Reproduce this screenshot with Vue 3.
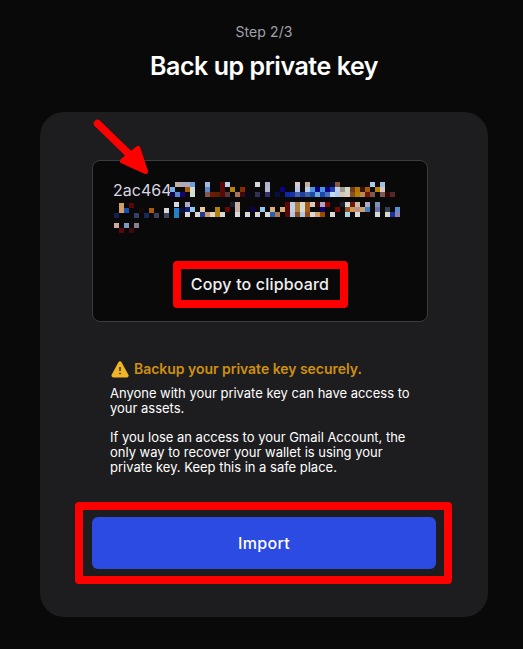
<script setup>
const rows = [
  { x: 170, y: 182, cells: '1:c0b0a0 2:b0a8c0 3:b0a8c0 4:6ca0dc 7:a8b8d8 10:580808 11:c0d0e8 17:d8d8dc 19:b0b0d0 25:d8c8c8 27:c8b098 32:080830 33:885838 40:b0c8e8 42:a0c0e0' },
  { x: 170, y: 187, cells: '0:78b0e8 3:a85c00 4:d0dcd8 7:5c88c8 10:580808 12:b88408 14:882c00 19:b8b8d0 22:100088 25:b8c8e8 27:c0d0e8 28:4898e0 29:080088 30:4898e0 31:100088 32:2040b0 33:c0d0e8 34:a09888 35:d0d8c8 36:783810 37:b07800 38:401000 39:a05c08 41:b88400 42:d8c8c8' },
  { x: 170, y: 192, cells: '0:100050 1:5888c8 2:180078 4:d0dcd0 7:805850 8:701808 9:582000 10:580808 11:583840 13:a87058 14:400810 15:080820 17:303058 19:383068 21:081040 23:1028a8 24:1830a8 25:4860a8 26:2040a8 27:4060a8 28:1848b0 29:70a8d8 30:1848b0 31:4870c0 32:c0dcf0 33:b0d0e8 34:d8c8b0 35:d8d0c8 36:885020 37:b08000 38:b88858 39:701808 40:805850 42:805850 43:300808 44:582828' },
  { x: 170, y: 202, cells: '3:b0a8c0 12:182030 13:c8b0a8 23:580808 24:c0d0e8 25:b08040 26:d8dcd0 27:a05c18 28:d8c8c0 29:380808 30:b0a8c0 31:780808 34:182030 35:d8d8d8 36:701808 37:d0b8a8 39:b0a8c0 41:8090b8' },
  { x: 170, y: 207, cells: '3:101878 4:90c8f0 6:e8c8a0 9:b08010 11:680808 13:c8b0a8 16:100050 18:90c8f0 20:d8b080 22:d8b080 23:580808 24:c0d0e8 25:b08040 26:d8dcd0 27:a05c18 30:100070 33:780808 35:905820 36:d09850 37:b89088 38:d0a068 39:3880c8 41:7070a8 43:384058 45:5890d0' },
  { x: 170, y: 212, cells: '3:d8d8d8 5:d8d8d8 6:203890 7:c89870 8:e0d8c0 9:b08010 10:d8d8d8 13:d8d8d8 15:d8d8d8 17:d8d8d8 19:d8d8d8 20:2860b0 21:b07850 23:580808 24:b0c8e0 25:884820 26:b0c8e0 27:904818 28:d8d8d8 29:d8a068 30:984c00 32:d8d8d8 35:b0d0e8 37:d8d8d8 39:180808 41:d8d8d8 43:d8d8c8 44:1830a0 45:9080b0' },
  { x: 114, y: 203, cells: '1:d0a068 3:580808' },
  { x: 114, y: 202, cells: '12:d0d8e0' },
  { x: 114, y: 208, cells: '1:d0a068 2:1850b0 5:180808 7:a85c08 10:d8d8d8 12:2080c8 13:081040' },
  { x: 114, y: 213, cells: '0:102050 4:304068 6:182858 8:404058 10:404860 12:2080c8' },
  { x: 114, y: 223, cells: '0:d0a8a0 2:8098c0 4:888090' },
  { x: 114, y: 228, cells: '1:580808 3:400810' },
]
const tiles = rows.flatMap(({ x, y, cells }) =>
  cells.split(' ').map((cell) => {
    const [column, colour] = cell.split(':')
    return { x: x + Number(column) * 5, y, colour: '#' + colour }
  }),
)
</script>

<template>
  <main class="page">
    <p class="step">Step 2/3</p>
    <h1 class="title">Back up private key</h1>
    <section class="card">
      <div class="keybox">
        <span class="key">2ac464</span>
        <button class="copy">Copy to clipboard</button>
      </div>
      <div class="notice">
        <h2 class="warning">
          <svg class="icon" width="18" height="17" viewBox="0 0 18 17">
            <path d="M9 2.200 15.800 14.600H2.200Z" fill="#f0b429" stroke="#f0b429" stroke-width="3.600" stroke-linejoin="round" />
            <path d="M9 6v4" stroke="#5a4a20" stroke-width="1.800" />
            <circle cx="9" cy="12.500" r="1" fill="#5a4a20" />
          </svg>
          <span class="warning-text">Backup your private key securely.</span>
        </h2>
        <p class="copytext">Anyone with your private key can have access to<br />your assets.</p>
        <p class="copytext">If you lose an access to your Gmail Account, the<br />only way to recover your wallet is using your<br />private key. Keep this in a safe place.</p>
      </div>
      <button class="import">Import</button>
    </section>
    <svg class="overlay" width="523" height="649" viewBox="0 0 523 649">
      <g shape-rendering="crispEdges">
        <rect v-for="(t, i) in tiles" :key="i" :x="t.x" :y="t.y" width="5" height="5" :fill="t.colour" />
      </g>
      <g fill="none" stroke="#f00">
        <path d="M97.500 123.500 132 157" stroke-width="7.500" stroke-linecap="round" />
        <path d="M122.500 161 138 148.500 145.500 171.500Z" fill="#f00" stroke-width="5" stroke-linejoin="round" />
        <g stroke-width="8" stroke-linejoin="round">
          <rect x="177" y="265" width="167" height="39" />
          <rect x="79" y="506" width="369" height="74" />
        </g>
      </g>
    </svg>
  </main>
</template>

<style>
body { margin: 0; background: #090909; }
</style>

<style scoped>
.page {
  position: relative;
  box-sizing: border-box;
  width: 523px;
  height: 649px;
  padding-left: 40px;
  overflow: hidden;
  background: #090909;
  color: #fff;
  font-family: Inter, sans-serif;
}
.step, .title { width: 448px; margin: 0; text-align: center; }
.step { padding-top: 22px; font-size: 14px; line-height: 20px; color: #a1a1aa; letter-spacing: 0.1px; }
.title { padding-top: 8px; font-size: 25px; font-weight: 600; line-height: 32px; letter-spacing: -0.45px; }
.card {
  box-sizing: border-box;
  width: 448px;
  height: 505px;
  margin-top: 30px;
  padding: 48px 52px;
  border-radius: 24px;
  background: #1d1d1f;
}
.keybox {
  box-sizing: border-box;
  display: flex;
  flex-direction: column;
  width: 336px;
  height: 162px;
  padding: 19px 20px;
  border: 1px solid #3c3c40;
  border-radius: 8px;
  background: #090909;
}
.key { font-size: 16px; line-height: 20px; color: #d9d5e2; }
button { padding: 0; border: 0; font-family: inherit; color: #fff; font-weight: 500; font-size: 16px; letter-spacing: 0.17px; }
.copy { align-self: center; margin-top: 74px; line-height: 20px; background: none; color: #f0f0f2; }
.notice { padding: 37px 0 0 18px; }
.warning { display: flex; align-items: center; gap: 5px; height: 20px; margin: 0 0 7px; color: #cf900f; font-size: 14px; font-weight: 600; line-height: 20px; letter-spacing: -0.03px; white-space: nowrap; }
.icon { flex: none; margin-left: 1px; }
.copytext { margin: 0 0 14px; font-size: 13px; line-height: 15px; letter-spacing: -0.015px; white-space: nowrap; color: #fff; }
.import { display: block; width: 344px; height: 52px; margin-top: 42px; border-radius: 6px; background: #2b4be2; letter-spacing: 0.3px; }
.overlay { position: absolute; inset: 0; }
</style>
